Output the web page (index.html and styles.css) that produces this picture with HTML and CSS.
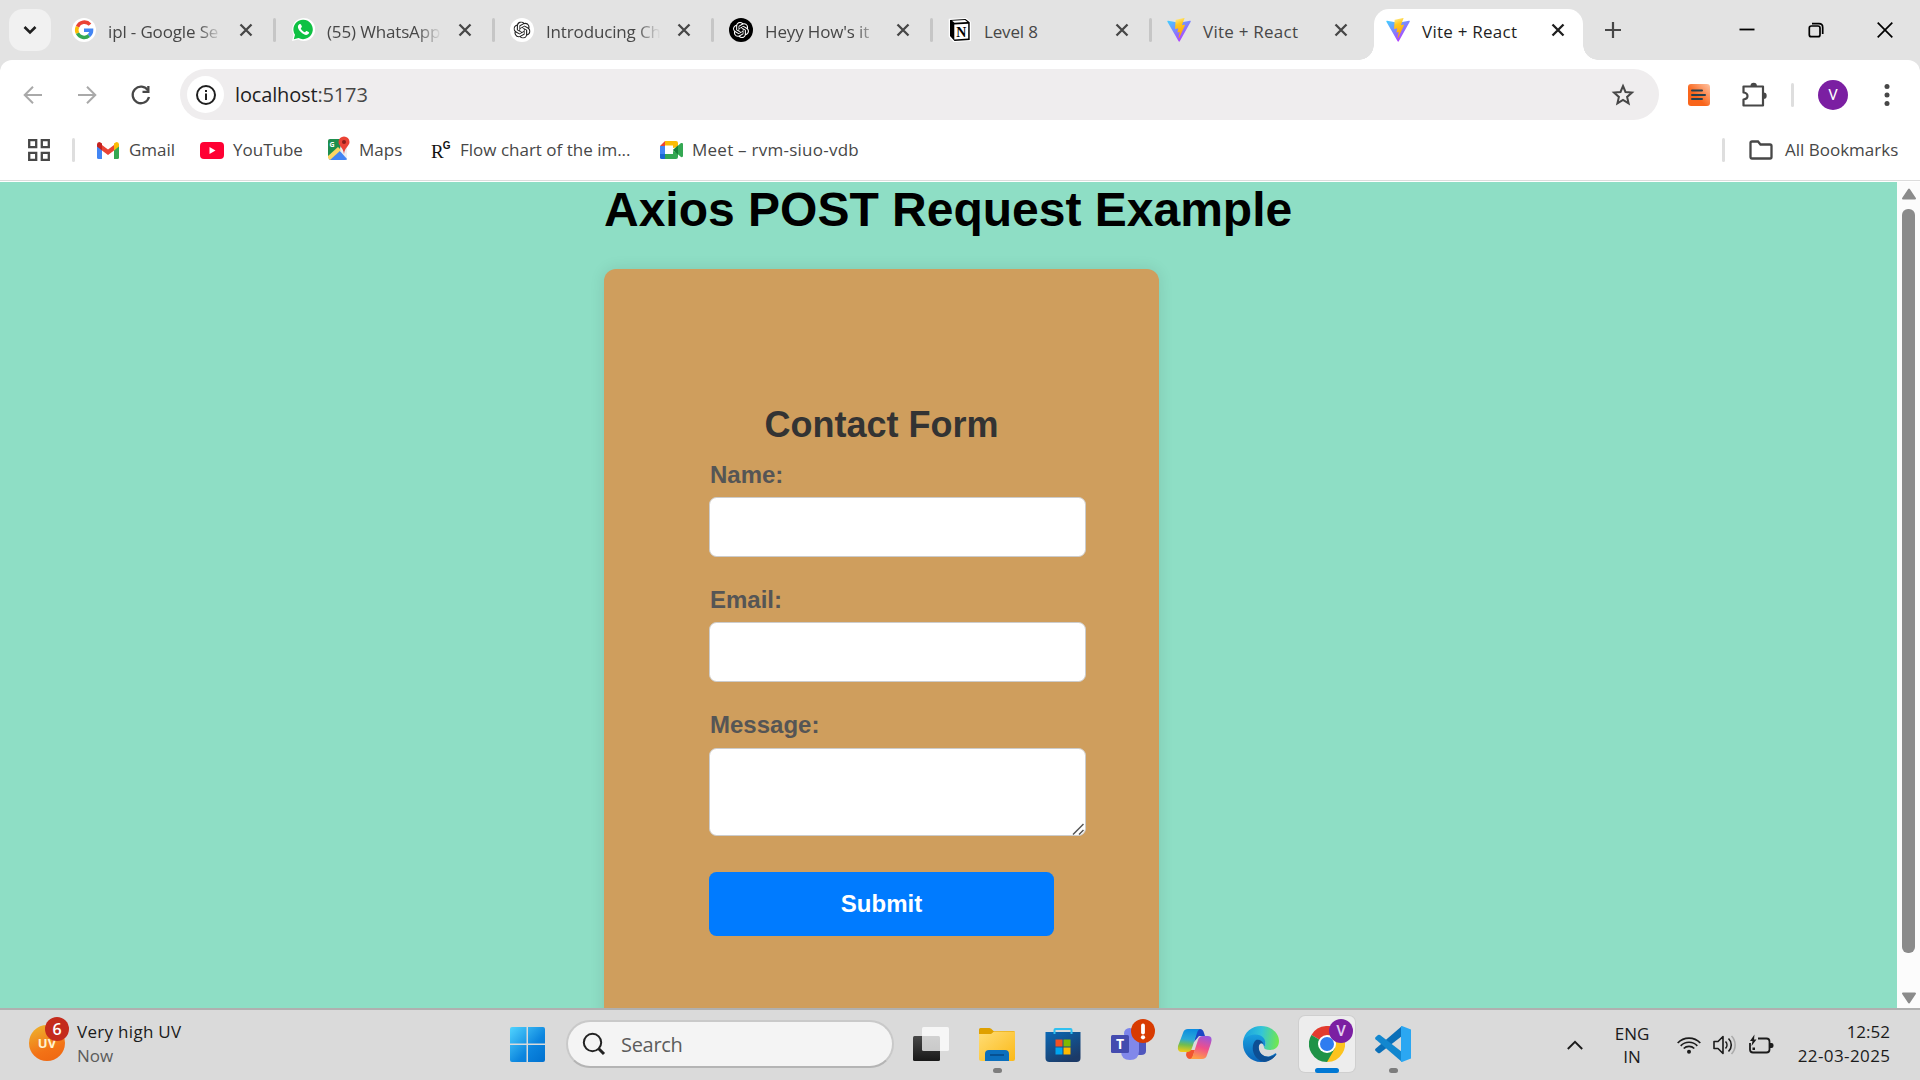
FILE: index.html
```html
<!DOCTYPE html>
<html lang="en">
<head>
<meta charset="utf-8">
<title>Vite + React</title>
<link rel="stylesheet" href="styles.css">
</head>
<body>
<svg class="defs" aria-hidden="true">
  <defs>
    <linearGradient id="viteA" x1="0" y1="0" x2="0.7" y2="1"><stop offset="0" stop-color="#41d1ff"/><stop offset="1" stop-color="#bd34fe"/></linearGradient>
    <linearGradient id="viteB" x1="0.3" y1="0" x2="0.5" y2="1"><stop offset="0" stop-color="#ffea83"/><stop offset="0.3" stop-color="#ffc820"/><stop offset="1" stop-color="#ff9d00"/></linearGradient>
    <symbol id="vite" viewBox="0 0 24 24"><path d="M23.7 3.7 12.8 23.3c-.3.5-.9.5-1.2 0L.4 3.8c-.3-.5.2-1.1.7-1l11 2 10.900-2c.6-.1 1 .4.7.9z" fill="url(#viteA)"/><path d="M17 .1 8.900 1.700c-.2 0-.3.200-.3.300L8.100 10.500c0 .2.200.4.400.4l2.300-.5c.2-.1.400.1.4.4l-.7 3.300c0 .2.200.4.400.4l1.400-.4c.2-.1.400.1.4.4l-1.100 5.200c-.1.300.4.500.5.200l6-12.800c.1-.200-.1-.500-.4-.400l-2.300.400c-.2 0-.4-.2-.4-.4l2.500-6.200c.1-.300-.1-.5-.5-.4z" fill="url(#viteB)"/></symbol>
    <symbol id="knot" viewBox="0 0 24 24"><path fill="currentColor" d="M22.2819 9.8211a5.9847 5.9847 0 0 0-.5157-4.9108 6.0462 6.0462 0 0 0-6.5098-2.9A6.0651 6.0651 0 0 0 4.9807 4.1818a5.9847 5.9847 0 0 0-3.9977 2.9 6.0462 6.0462 0 0 0 .7427 7.0966 5.98 5.98 0 0 0 .511 4.9107 6.051 6.051 0 0 0 6.5146 2.9001A5.9847 5.9847 0 0 0 13.2599 24a6.0557 6.0557 0 0 0 5.7718-4.2058 5.9894 5.9894 0 0 0 3.9977-2.9001 6.0557 6.0557 0 0 0-.7475-7.0729zm-9.022 12.6081a4.4755 4.4755 0 0 1-2.8764-1.0408l.1419-.0804 4.7783-2.7582a.7948.7948 0 0 0 .3927-.6813v-6.7369l2.02 1.1686a.071.071 0 0 1 .038.052v5.5826a4.504 4.504 0 0 1-4.4945 4.4944zm-9.6607-4.1254a4.4708 4.4708 0 0 1-.5346-3.0137l.142.0852 4.783 2.7582a.7712.7712 0 0 0 .7806 0l5.8428-3.3685v2.3324a.0804.0804 0 0 1-.0332.0615L9.74 19.9502a4.4992 4.4992 0 0 1-6.1408-1.6464zM2.3408 7.8956a4.485 4.485 0 0 1 2.3655-1.9728V11.6a.7664.7664 0 0 0 .3879.6765l5.8144 3.3543-2.0201 1.1685a.0757.0757 0 0 1-.071 0l-4.8303-2.7865A4.504 4.504 0 0 1 2.3408 7.872zm16.5963 3.8558L13.1038 8.364 15.1192 7.2a.0757.0757 0 0 1 .071 0l4.8303 2.7913a4.4944 4.4944 0 0 1-.6765 8.1042v-5.6772a.79.79 0 0 0-.407-.667zm2.0107-3.0231l-.142-.0852-4.7735-2.7818a.7759.7759 0 0 0-.7854 0L9.409 9.2297V6.8974a.0662.0662 0 0 1 .0284-.0615l4.8303-2.7866a4.4992 4.4992 0 0 1 6.6802 4.66zM8.3065 12.863l-2.02-1.1638a.0804.0804 0 0 1-.038-.0567V6.0742a4.4992 4.4992 0 0 1 7.3757-3.4537l-.142.0805L8.704 5.459a.7948.7948 0 0 0-.3927.6813zm1.0976-2.3654l2.602-1.4998 2.6069 1.4998v2.9994l-2.5974 1.4997-2.6067-1.4997Z"/></symbol>
    <symbol id="x" viewBox="0 0 14 14"><path d="M1.500 1.500l11 11m0-11l-11 11" stroke="currentColor" stroke-width="2.300" fill="none"/></symbol>
  </defs>
</svg>

<header class="tabstrip">
  <button class="tabsearch"><svg width="14" height="10" viewBox="0 0 14 10"><path d="M1.500 2 7 7.500 12.500 2" fill="none" stroke="#1f1f1f" stroke-width="2.600"/></svg></button>
  <nav class="tabs">
    <div class="tab">
      <svg class="fav" viewBox="0 0 24 24"><circle cx="12" cy="12" r="12" fill="#fff"/><g fill="none" stroke-width="3.600"><path d="M18 6.600A7.500 7.500 0 0 0 5.500 8.700" stroke="#ea4335"/><path d="M5.500 8.700a7.500 7.500 0 0 0 0 6.600" stroke="#fbbc05"/><path d="M5.500 15.300A7.500 7.500 0 0 0 17 17.700" stroke="#34a853"/><path d="M17 17.700a7 7 0 0 0 2.500-5.400H12" stroke="#4285f4"/></g></svg>
      <span class="title fade">ipl - Google Se</span><svg class="close"><use href="#x"/></svg>
    </div>
    <div class="tab">
      <svg class="fav" viewBox="0 0 24 24"><path d="M1 23 2.600 17A11.500 11.500 0 1 1 7 21.500z" fill="#fff"/><path d="M2.800 21.300l1.200-4.500A9.700 9.700 0 1 1 7.500 20z" fill="#0fc143"/><path d="M8.300 6.300c-2.500 1.800-1.300 5 1.600 7.800 2.800 2.800 6 4 7.900 1.500.5-.8.3-1.300-.2-1.600l-2-1c-.8-.4-1.200 1.300-1.800 1.300-1.500-.4-3.400-2.300-4-3.800 0-.6 1.400-1.200 1.100-2l-.9-1.900c-.3-.6-1.100-.7-1.700-.3z" fill="#fff"/></svg>
      <span class="title fade">(55) WhatsApp</span><svg class="close"><use href="#x"/></svg>
    </div>
    <div class="tab">
      <svg class="fav knot" viewBox="0 0 24 24"><circle cx="12" cy="12" r="12" fill="#fff"/><use href="#knot" x="3.500" y="3.500" width="17" height="17"/></svg>
      <span class="title fade">Introducing Ch</span><svg class="close"><use href="#x"/></svg>
    </div>
    <div class="tab">
      <svg class="fav knot light" viewBox="0 0 24 24"><circle cx="12" cy="12" r="12" fill="#000"/><use href="#knot" x="4" y="4" width="16" height="16"/></svg>
      <span class="title fade">Heyy How's it</span><svg class="close"><use href="#x"/></svg>
    </div>
    <div class="tab">
      <svg class="fav" viewBox="0 0 24 24"><path d="M1.500 1.500 18 .8l4.200 3.500v18L6 23.300 1.500 18.500z" fill="#fff" stroke="#fff" stroke-width="1.500"/><path d="M2 2l15.500-1 4.200 3.300v17.700L6.500 23 2 18z" fill="#000"/><path d="M4 2.800l13-.8 2.300 2-12.800.8z" fill="#fff"/><path d="M6.300 6.500l13.900-.8v14.900l-13.900.8z" fill="#fff"/><text x="13.200" y="18.700" text-anchor="middle" class="ntxt">N</text></svg>
      <span class="title">Level 8</span><svg class="close"><use href="#x"/></svg>
    </div>
    <div class="tab last">
      <svg class="fav"><use href="#vite"/></svg>
      <span class="title wide">Vite + React</span><svg class="close"><use href="#x"/></svg>
    </div>
    <div class="tab active">
      <svg class="fav"><use href="#vite"/></svg>
      <span class="title wide">Vite + React</span><svg class="close"><use href="#x"/></svg>
    </div>
  </nav>
  <svg class="plus" width="16" height="16" viewBox="0 0 16 16"><path d="M8 0v16M0 8h16" stroke="#474747" stroke-width="2.200"/></svg>
  <div class="winctl">
    <svg width="16" height="16" viewBox="0 0 16 16"><path d="M.5 7.500h15" stroke="#000" stroke-width="1.800"/></svg>
    <svg width="16" height="16" viewBox="0 0 16 16"><rect x="1.300" y="4" width="10.700" height="10.700" rx="2" fill="none" stroke="#000" stroke-width="1.700"/><path d="M4 1.700h7q3.700 0 3.700 3.700V12" fill="none" stroke="#000" stroke-width="1.700"/></svg>
    <svg width="16" height="16" viewBox="0 0 16 16"><path d="M.7.700l14.600 14.600M15.300.700.7 15.300" stroke="#000" stroke-width="1.700"/></svg>
  </div>
</header>

<section class="chrome">
  <div class="toolbar">
    <svg class="nav" viewBox="0 0 24 24"><path d="M21 12H4m8-8.300L3.700 12l8.300 8.300" fill="none" stroke="#a9a9a9" stroke-width="2"/></svg>
    <svg class="nav" viewBox="0 0 24 24"><path d="M3 12h17M12 3.700l8.300 8.300-8.300 8.300" fill="none" stroke="#a9a9a9" stroke-width="2"/></svg>
    <svg class="nav" viewBox="0 0 24 24"><path d="M19 7.500A8.300 8.300 0 1 0 20 14" fill="none" stroke="#474747" stroke-width="2.300"/><path d="M20.500 3v7h-7V7.700h4.700V3z" fill="#474747"/></svg>
    <div class="omnibox">
      <span class="info"><svg width="22" height="22" viewBox="0 0 22 22"><circle cx="11" cy="11" r="9" fill="none" stroke="#1f1f1f" stroke-width="2"/><path d="M11 9.500V16M11 6v2" stroke="#1f1f1f" stroke-width="2"/></svg></span>
      <span class="url">localhost<i>:5173</i></span>
      <svg class="star" width="24" height="24" viewBox="0 0 24 24"><path d="M12 3l2.500 6 6.500.6-4.900 4.300 1.500 6.400-5.600-3.400-5.600 3.400 1.500-6.400L3 9.600 9.500 9z" fill="none" stroke="#474747" stroke-width="2"/></svg>
    </div>
    <svg class="ext" width="22" height="22" viewBox="0 0 22 22"><defs><linearGradient id="ex" x1="1" y1="0" x2=".4" y2=".6"><stop offset="0" stop-color="#ffc4a4"/><stop offset="1" stop-color="#f9651b"/></linearGradient></defs><rect width="22" height="22" rx="3" fill="url(#ex)"/><path d="M4 6.500h10M4 11h13M4 15h10" stroke="#26414f" stroke-width="2" stroke-linecap="round"/></svg>
    <svg class="puz" width="26" height="26" viewBox="0 0 26 26"><path d="M2.500 4.500h19.500V23.500H2.500v-6q4-.5 4-3.500t-4-3.500z" fill="none" stroke="#474747" stroke-width="2.200" stroke-linejoin="round"/><path d="M9.500 4a3.200 3.200 0 0 1 6.400 0zM22.500 10.500a3.200 3.200 0 0 1 0 6.400z" fill="#474747"/></svg>
    <span class="sep"></span>
    <span class="avatar">V</span>
    <svg class="dots" width="6" height="26" viewBox="0 0 6 26"><g fill="#474747"><circle cx="3" cy="4.500" r="2.500"/><circle cx="3" cy="13" r="2.500"/><circle cx="3" cy="21.500" r="2.500"/></g></svg>
  </div>
  <div class="bookmarks">
    <svg class="apps" width="22" height="22" viewBox="0 0 22 22"><path d="M1.200 1.200h7v7h-7zM13.800 1.200h7v7h-7zM1.200 13.800h7v7h-7zM13.800 13.800h7v7h-7z" fill="none" stroke="#474747" stroke-width="2.300"/></svg>
    <span class="sep"></span>
    <svg class="gm" width="22" height="17" viewBox="0 0 22 17"><path d="M0 2v13.500Q0 17 1.500 17H5V6z" fill="#4285f4"/><path d="M22 2v13.500q0 1.500-1.500 1.500H17V6z" fill="#34a853"/><path d="M5 3v5.500l6 4.500 6-4.500V3l-6 4.500z" fill="#ea4335"/><path d="M0 2.500Q0 0 2.200 0 3.400 0 5 1.500v7L0 4.500z" fill="#c5221f"/><path d="M22 2.500Q22 0 19.800 0 18.600 0 17 1.500v7l5-4z" fill="#fbbc04"/></svg>
    <span class="bt b1">Gmail</span>
    <svg class="yt" width="24" height="17" viewBox="0 0 24 17"><rect width="24" height="17" rx="4" fill="#ff0033"/><path d="M9.500 5v7l6-3.500z" fill="#fff"/></svg>
    <span class="bt b2">YouTube</span>
    <svg class="mp" width="22" height="26" viewBox="0 0 22 26"><path d="M0 5q0-2 2-2h17v21H2q-2 0-2-2z" fill="#eceff1"/><path d="M0 5q0-2 2-2h12l-2 10L1.500 22Q0 22 0 20z" fill="#1e8e4e"/><path d="M1 24 11 14l8 9q0 1-2 1z" fill="#4285f4"/><path d="M0 20 10 11l3 3L2 24 0 22z" fill="#fdd663"/><path d="M16 .5a5.500 5.500 0 0 0-5.500 5.500c0 4 4.700 5 5.500 12 .8-7 5.500-8 5.500-12A5.500 5.500 0 0 0 16 .5z" fill="#ea4335"/><circle cx="16" cy="6" r="2" fill="#8c1d18"/><text x="1.500" y="11" class="mg">G</text></svg>
    <span class="bt b3">Maps</span>
    <span class="rg">R<sup>G</sup></span>
    <span class="bt b4">Flow chart of the im...</span>
    <svg class="mt" width="23" height="18" viewBox="0 0 23 18"><path d="M5 0h11q2 0 2 2v4l-5 1V4.500H5z" fill="#fbbc04"/><path d="M0 5l5-5v5z" fill="#ea4335"/><path d="M0 5h5v8H0z" fill="#4285f4"/><path d="M0 13h5v5H1.500Q0 18 0 16.500z" fill="#1967d2"/><path d="M5 13h8v-3l5 2v4q0 2-2 2H5zM13 9l8-7q2-.5 2 1v12q0 1.500-2 1z" fill="#34a853"/><path d="M13 9l5-4.500v9z" fill="#188038"/></svg>
    <span class="bt b5">Meet – rvm-siuo-vdb</span>
    <span class="sep end"></span>
    <svg class="folder" width="24" height="20" viewBox="0 0 24 20"><path d="M3 1.500h6l2.500 3H21q1.500 0 1.500 1.500v11q0 1.500-1.500 1.500H3q-1.500 0-1.500-1.500V3q0-1.500 1.500-1.500z" fill="none" stroke="#474747" stroke-width="2.300"/></svg>
    <span class="bt b6">All Bookmarks</span>
  </div>
</section>

<main class="viewport">
  <div class="page">
    <div class="app">
      <h1>Axios POST Request Example</h1>
      <form class="card">
        <h2>Contact Form</h2>
        <label>Name:</label>
        <input type="text">
        <label>Email:</label>
        <input type="text">
        <label>Message:</label>
        <div class="area">
          <textarea></textarea>
          <svg class="grip" width="12" height="12" viewBox="0 0 12 12"><path d="M1 11.500 11.500 1M7 11.500 11.500 7" stroke="#555" stroke-width="1.500"/></svg>
        </div>
        <button type="button" class="submit">Submit</button>
      </form>
    </div>
  </div>
  <div class="scrollbar">
    <svg width="16" height="12" viewBox="0 0 16 12"><path d="M8 1.500 14 10.500H2z" fill="#8b8b8b" stroke="#8b8b8b" stroke-width="2" stroke-linejoin="round"/></svg>
    <span class="thumb"></span>
    <svg width="16" height="12" viewBox="0 0 16 12"><path d="M8 10.500 14 1.500H2z" fill="#8b8b8b" stroke="#8b8b8b" stroke-width="2" stroke-linejoin="round"/></svg>
  </div>
</main>

<footer class="taskbar">
  <div class="weather">
    <span class="uv">UV<b>6</b></span>
    <div class="wt"><span class="w1">Very high UV</span><span class="w2">Now</span></div>
  </div>
  <svg class="start" width="35" height="35" viewBox="0 0 35 35"><defs><linearGradient id="win" x1="0" y1="0" x2="1" y2="1"><stop offset="0" stop-color="#50d4ff"/><stop offset=".6" stop-color="#0c85de"/><stop offset="1" stop-color="#0070cf"/></linearGradient></defs><path d="M2 0h14.500v16.500H0V2q0-2 2-2zM18 0h15q2 0 2 2v14.500H18zM0 18h16.500v17H2q-2 0-2-2zM18 18h17v15q0 2-2 2H18z" fill="url(#win)"/></svg>
  <div class="search"><svg width="24" height="24" viewBox="0 0 24 24"><circle cx="10.500" cy="10.500" r="8.700" fill="none" stroke="#222" stroke-width="2"/><path d="M16.500 16.500 22 22" stroke="#222" stroke-width="3"/></svg><span>Search</span></div>
  <div class="dock">
    <div class="item"><svg viewBox="0 0 36 36"><defs><linearGradient id="tv" x1="0" y1="0" x2="0" y2="1"><stop offset="0" stop-color="#484848"/><stop offset="1" stop-color="#181818"/></linearGradient></defs><rect x="0" y="10" width="27" height="25" rx="1.500" fill="url(#tv)"/><rect x="9" y="1" width="27" height="24" rx="1.500" fill="#fff" fill-opacity=".75"/></svg></div>
    <div class="item run"><svg viewBox="0 0 36 36"><defs><linearGradient id="fe" x1="0" y1="0" x2="1" y2="1"><stop offset="0" stop-color="#ffdd76"/><stop offset="1" stop-color="#fbb917"/></linearGradient></defs><path d="M0 9V3.500Q0 2 1.500 2h9q1.500 0 4 3h20q1.500 0 1.500 1.500V15H0z" fill="#dfa000"/><path d="M0 8h12l3-2.500h21V33q0 2-2 2H2q-2 0-2-2z" fill="url(#fe)"/><path d="M6 35V28q0-4 4-4h16q4 0 4 4v7z" fill="#0b6fbd"/><path d="M11 29h14" stroke="#064b87" stroke-width="1.600"/></svg></div>
    <div class="item"><svg viewBox="0 0 36 36"><defs><linearGradient id="st" x1="0" y1="0" x2=".6" y2="1"><stop offset="0" stop-color="#0a68b5"/><stop offset="1" stop-color="#1c3a67"/></linearGradient></defs><path d="M.5 6h35v26q0 4-4 4h-27q-4 0-4-4z" fill="url(#st)"/><path d="M9.500 8V4q0-1 1-1h15q1 0 1 1v4" fill="none" stroke="#2fc0f0" stroke-width="2"/><path d="M10.500 13.500h7v7h-7z" fill="#f25022"/><path d="M18.500 13.500h7v7h-7z" fill="#7fba00"/><path d="M10.500 21.500h7v7h-7z" fill="#00a4ef"/><path d="M18.500 21.500h7v7h-7z" fill="#ffb900"/></svg></div>
    <div class="item"><svg viewBox="0 0 36 36"><path d="M22 12h13v13q0 4-5 4h-6z" fill="#4f56bd"/><circle cx="18.500" cy="7.500" r="5.500" fill="#7b83eb"/><path d="M10 12h18v13q0 9-9 9t-9-9z" fill="#8188ea"/><rect y="9" width="18" height="18" rx="1.500" fill="#444baf"/><text x="9" y="23" text-anchor="middle" class="tt">T</text></svg><span class="badge alert"><svg width="24" height="24" viewBox="0 0 24 24"><path d="M12 6.500v7" stroke="#fff" stroke-width="3.800" stroke-linecap="round"/><circle cx="12" cy="18.300" r="2.100" fill="#fff"/></svg></span></div>
    <div class="item"><svg viewBox="0 0 36 36"><defs><linearGradient id="c1" x1=".5" y1="0" x2=".4" y2="1"><stop offset="0" stop-color="#0b8ce0"/><stop offset=".45" stop-color="#2ba9d6"/><stop offset=".7" stop-color="#71bd4f"/><stop offset="1" stop-color="#f0cb18"/></linearGradient><linearGradient id="c2" x1=".7" y1="0" x2=".4" y2="1"><stop offset="0" stop-color="#9b57dc"/><stop offset=".5" stop-color="#ef4f8a"/><stop offset="1" stop-color="#ffa046"/></linearGradient></defs><path d="M20 3h3q3 0 4 4l1 3h-6l-5 6z" fill="#1b47c4"/><path d="M10 24h8l-3 9h-2q-3 0-4-4z" fill="#f1552f"/><path d="M11 3h13q-3 0-4 4l-5 15q-1 4-5 4H5q-5 0-4-6L6 7q1-4 5-4z" fill="url(#c1)"/><path d="M25 33H12q3 0 4-4l5-15q1-4 5-4h5q5 0 3 7l-4 12q-1 4-5 4z" fill="url(#c2)"/></svg></div>
    <div class="item"><svg viewBox="0 0 36 36"><defs><linearGradient id="e1" x1="0" y1=".4" x2="1" y2=".5"><stop offset="0" stop-color="#1a9fe0"/><stop offset=".5" stop-color="#33c5d8"/><stop offset="1" stop-color="#72e84c"/></linearGradient><linearGradient id="e2" x1="0" y1="0" x2="0" y2="1"><stop offset="0" stop-color="#1aa0df"/><stop offset="1" stop-color="#0a63b8"/></linearGradient></defs><path d="M0 16C1 6 9 0 18 0c10 0 18 7 18 15 0 6-4 9-9 9-4 0-6-1-6-2.500 0-1 1.500-2 1.500-4 0-4-4-7-9-7C7 10.500 1 14 0 20z" fill="url(#e1)"/><path d="M0 18c0-6 6-9.500 12-9.500 7 0 10.500 4 10.500 9 0 2-1.500 3-1.500 4 0-3-2-5-4-4-3 2-2 9 3 12 5 2.500 9 0 12-2 1-.5 2 .5 1 1.500C30 33 25 36 18 36 8 36 0 28 0 18z" fill="url(#e2)"/><path d="M13 14c-6 5-4 19 8 22 6-.5 10-4 12.500-8-3 2-8 4.500-13 1.500-5-3-6-10-3-12 1-.5 2-.5 3 .5-1-3-4-5-7.500-4z" fill="#0d4f94"/></svg></div>
    <div class="item current"><svg viewBox="0 0 36 36"><path d="M18 18 2.400 9A18 18 0 0 1 33.600 9z" fill="#e33b2e"/><path d="M18 18 33.600 9A18 18 0 0 1 18 36z" fill="#fcc31e"/><path d="M2.400 9A18 18 0 0 0 18 36l7.800-13.500L18 18z" fill="#1f9347"/><path d="M18 9h15.600L35 14l-9 8z" fill="#fcc31e"/><path d="M18 9h15.600A18 18 0 0 0 18 0z" fill="#e33b2e"/><circle cx="18" cy="18" r="9" fill="#fff"/><circle cx="18" cy="18" r="7" fill="#2f7cf0"/></svg><span class="badge vbadge">V</span></div>
    <div class="item run"><svg viewBox="0 0 36 36"><path d="M27 0v10L5 27q-1 .7-2 0l-2.500-2.200q-.8-1 0-2z" fill="#0a6fb8"/><path d="M27 36V26L5 9q-1-.7-2 0L.5 11.200q-.8 1 0 2z" fill="#1287cf"/><path d="M27 0l9 3.500v29L27 36q-1 0-1-1V1q0-1 1-1z" fill="#2ba7f2"/></svg></div>
  </div>
  <div class="tray">
    <svg class="chev" width="16" height="10" viewBox="0 0 16 10"><path d="M.8 9 8 1.800 15.200 9" fill="none" stroke="#1b1b1b" stroke-width="1.900"/></svg>
    <div class="lang"><span>ENG</span><span>IN</span></div>
    <svg class="wifi" width="24" height="18" viewBox="0 0 24 18"><g fill="none" stroke="#1b1b1b" stroke-width="1.700"><path d="M.7 7a15.500 15.500 0 0 1 22.600 0M3.700 9.800a11.500 11.500 0 0 1 16.600 0M6.700 12.500a7.500 7.500 0 0 1 10.600 0"/></g><circle cx="12" cy="15.700" r="2" fill="#1b1b1b"/></svg>
    <svg class="vol" width="24" height="20" viewBox="0 0 24 20"><path d="M1 6.500h4l5-5v17l-5-5H1z" fill="none" stroke="#1b1b1b" stroke-width="1.600" stroke-linejoin="round"/><path d="M12.500 6.500a5 5 0 0 1 0 7M15.500 3.500a9 9 0 0 1 0 13" fill="none" stroke="#1b1b1b" stroke-width="1.600"/><path d="M18.500 1a13 13 0 0 1 0 18" fill="none" stroke="#aaa" stroke-width="1.600"/></svg>
    <svg class="bat" width="25" height="20" viewBox="0 0 25 20"><path d="M9 3.500h8.500q3 0 3 3v8q0 3-3 3H4q-3 0-3-3V8" fill="none" stroke="#1b1b1b" stroke-width="1.800"/><path d="M21 8h1.500q2 0 2 2v1q0 2-2 2H21z" fill="#1b1b1b"/><path d="M5.500-.5 1 6h2.500L2.500 11 7.500 4.500H5zM3.500 12.500h2.500v2.500H3.500z" fill="#1b1b1b"/></svg>
    <div class="clock"><span class="k1">12:52</span><span class="k2">22-03-2025</span></div>
  </div>
</footer>
</body>
</html>
```
FILE: styles.css
```css
* { box-sizing: border-box; }
body { margin: 0; width: 1920px; height: 1080px; overflow: hidden; display: flex; flex-direction: column; font-family: "Open Sans", "Noto Sans", sans-serif; background: #e3e3e3; }
svg { display: block; flex: none; }
.defs { position: absolute; width: 0; height: 0; }
button { border: 0; padding: 0; }

.tabstrip { height: 60px; display: flex; align-items: center; background: #e3e3e3; flex: none; }
.tabsearch { width: 42px; height: 42px; margin-left: 9px; border-radius: 14px; background: #f1f1f1; display: flex; align-items: center; justify-content: center; }
.tabs { display: flex; align-self: stretch; margin-left: 4px; }
.tab { width: 219px; display: flex; align-items: center; padding-left: 17px; color: #474747; position: relative; }
.tab::after { content: ""; position: absolute; right: -2px; top: 18px; width: 3px; height: 24px; border-radius: 2px; background: #c6c6c6; }
.tab.last::after { display: none; }
.fav { width: 24px; height: 24px; }
.knot { color: #222; }
.knot.light { color: #fff; }
.title { width: 118px; margin-left: 12px; font-size: 17px; letter-spacing: -0.15px; white-space: nowrap; padding-top: 2px; }
.title.wide { letter-spacing: 0.25px; }
.fade { -webkit-mask-image: linear-gradient(90deg, #000 76%, transparent 97%); mask-image: linear-gradient(90deg, #000 76%, transparent 97%); }
.close { width: 14px; height: 14px; margin-left: 13px; }
.ntxt { font: bold 14px "Liberation Serif", serif; }
.tab.active { width: 209px; margin: 9px 0 0 5px; height: 51px; padding: 0 0 9px 12px; background: #fff; border-radius: 15px 15px 0 0; color: #1f1f1f; }
.tab.active .close { margin-left: 11px; }
.tab.active::before, .tab.active::after { content: ""; position: absolute; top: auto; bottom: 0; width: 15px; height: 15px; border-radius: 0; }
.tab.active::before { left: -15px; background: radial-gradient(circle at 0 0, transparent 14.500px, #fff 15px); }
.tab.active::after { right: -15px; background: radial-gradient(circle at 100% 0, transparent 14.500px, #fff 15px); }
.plus { margin-left: 22px; }
.winctl { display: flex; gap: 53px; margin-left: auto; margin-right: 27px; }

.chrome { height: 122px; background: #fff; border-radius: 12px 12px 0 0; border-bottom: 1px solid #fff; flex: none; box-shadow: inset 0 -1px #dcdcdc; }
.toolbar { height: 69px; display: flex; align-items: center; padding: 0 0 0 21px; }
.nav { width: 24px; height: 24px; margin-right: 30px; }
.omnibox { width: 1479px; height: 51px; margin-left: -3px; border-radius: 26px; background: #efedee; display: flex; align-items: center; padding-left: 7px; }
.info { width: 37px; height: 37px; border-radius: 50%; background: #fff; display: flex; align-items: center; justify-content: center; }
.url { margin-left: 11px; font-size: 20px; letter-spacing: -0.15px; color: #1f1f1f; }
.url i { font-style: normal; color: #474747; }
.star { margin-left: auto; margin-right: 24px; }
.ext { margin-left: 29px; }
.puz { margin-left: 31px; }
.sep { width: 3px; height: 24px; border-radius: 2px; background: #dedede; }
.toolbar .sep { margin-left: 24px; }
.avatar { width: 30px; height: 30px; margin-left: 24px; border-radius: 50%; background: #7b1fa2; color: #fff; font: 15px/30px Roboto, sans-serif; text-align: center; }
.dots { margin-left: 36px; }
.bookmarks { height: 42px; display: flex; align-items: center; padding-left: 28px; color: #474747; font-size: 18px; }
.bookmarks .sep { margin-left: 22px; }
.bt { white-space: nowrap; font-size: 17px; margin-top: -2px; }
.gm { margin-left: 22px; }
.b1 { width: 46px; margin-left: 10px; }
.yt { margin-left: 25px; }
.b2 { width: 69px; margin-left: 9px; }
.mp { margin-left: 26px; margin-top: -3px; }
.b3 { width: 44px; margin-left: 9px; }
.rg { width: 18px; margin-left: 28px; font: 19px "Liberation Serif", serif; color: #111; white-space: nowrap; letter-spacing: -1px; padding-top: 4px; }
.rg sup { font: bold 10px "Liberation Sans", sans-serif; vertical-align: 9px; line-height: 0; }
.mg { font: bold 7px "Open Sans", sans-serif; fill: #fff; }
.b4 { width: 172px; margin-left: 11px; }
.mt { margin-left: 28px; }
.b5 { margin-left: 9px; letter-spacing: 0.25px; }
.bookmarks .sep.end { margin-left: auto; }
.folder { margin-left: 24px; }
.b6 { width: 113px; margin-right: 22px; margin-left: 12px; }

.viewport { height: 826px; display: flex; flex: none; overflow: hidden; }
.page { width: 1897px; background: #8edec5; font-family: "Liberation Sans", Arial, sans-serif; display: flex; justify-content: center; }
.app { width: 689px; }
h1 { margin: 0; padding-top: 1px; font-size: 48px; line-height: 54px; white-space: nowrap; color: #000; }
.card { width: 555px; height: 780px; margin-top: 32px; padding: 134px 105px 0; border-radius: 12px; background: #cf9e5d; box-shadow: 0 0 15px rgba(0, 0, 0, .1); }
h2 { margin: 0 0 14px; font-size: 36px; line-height: 44px; text-align: center; color: #333; }
label { display: block; height: 29px; margin-bottom: 7px; padding-left: 1px; font-size: 24px; font-weight: bold; line-height: 28px; color: #555; }
.card input, .card textarea { display: block; width: 377px; height: 60px; margin: 0 0 29px; border: 1.500px solid #ccc; border-radius: 7.500px; background: #fff; }
.area { position: relative; width: 377px; margin: 0 0 36px; padding-top: 1px; }
.card textarea { height: 88px; margin: 0; resize: none; }
.grip { position: absolute; right: 2px; bottom: 1px; }
.submit { display: block; width: 345px; height: 64px; border-radius: 7.500px; background: #007bff; color: #fff; font: bold 24px "Liberation Sans", Arial, sans-serif; }
.scrollbar { width: 23px; background: #fcfcfc; display: flex; flex-direction: column; align-items: center; padding: 6px 0 4px; }
.thumb { width: 13px; height: 744px; margin: 9px 0 auto; border-radius: 6px; background: #8b8b8b; }

.taskbar { height: 72px; border-top: 2px solid #b0b0b0; background: #dadada; display: flex; align-items: center; flex: none; }
.weather { display: flex; align-items: center; width: 510px; padding-left: 29px; }
.uv { position: relative; width: 36px; height: 36px; border-radius: 50%; background: linear-gradient(160deg, #edb72e, #f37216 65%, #ee6510); color: #fff3d0; font-size: 13px; font-weight: 700; line-height: 36px; text-align: center; margin-top: -5px; }
.uv b { position: absolute; left: 16px; top: -8px; width: 24px; height: 24px; border-radius: 50%; background: #c42b1c; color: #fff; font-size: 16px; font-weight: 600; line-height: 24px; }
.wt { display: flex; flex-direction: column; margin-left: 12px; font-size: 17px; line-height: 24px; margin-top: -3px; color: #1b1b1b; }
.w1 { letter-spacing: 0.3px; }
.w2 { color: #5c5c5c; }
.search { width: 328px; height: 48px; margin: 0 4px 0 21px; border: 2px solid #c9c9c9; border-bottom-color: #b4b4b4; border-radius: 24px; background: #f4f4f4; display: flex; align-items: center; padding-left: 14px; font-size: 20px; color: #5c5c5c; margin-top: -2px; }
.search span { margin-left: 15px; letter-spacing: -0.3px; }
.start { margin-top: -1px; }
.dock { display: flex; align-items: center; height: 70px; }
.item { position: relative; width: 66px; height: 70px; display: flex; align-items: center; justify-content: center; padding-bottom: 2px; }
.item > svg { width: 36px; height: 36px; position: relative; }
.run::after { content: ""; position: absolute; left: 29px; top: 58px; width: 9px; height: 5px; border-radius: 3px; background: #7d7d7d; }
.current::before { content: ""; position: absolute; left: 5px; top: 6px; width: 56px; height: 56px; border-radius: 6px; background: #ededed; box-shadow: 0 0 0 1px #cfcfcf; }
.current::after { content: ""; position: absolute; left: 21px; top: 58px; width: 24px; height: 5px; border-radius: 3px; background: #0078d4; }
.badge { position: absolute; left: 35px; top: 9px; width: 24px; height: 24px; border-radius: 50%; color: #fff; text-align: center; }
.alert { background: #d83b01; }
.vbadge { background: #7b1fa2; font: 500 15px/24px Roboto, sans-serif; color: #e3cdf0; }
.tt { font: bold 14px "Open Sans", sans-serif; fill: #fff; }
.tray { display: flex; align-items: center; margin-left: auto; margin-right: 30px; color: #1b1b1b; font-size: 17px; height: 66px; }
.lang { width: 40px; margin-left: 29px; display: flex; flex-direction: column; align-items: center; line-height: 23px; }
.wifi { margin-left: 25px; }
.vol { margin-left: 12px; }
.bat { margin-left: 12px; overflow: visible; }
.clock { width: 96px; margin-left: 20px; display: flex; flex-direction: column; align-items: flex-end; line-height: 24px; margin-top: -3px; }
.k2 { letter-spacing: 0.4px; margin-right: -0.4px; }
```
